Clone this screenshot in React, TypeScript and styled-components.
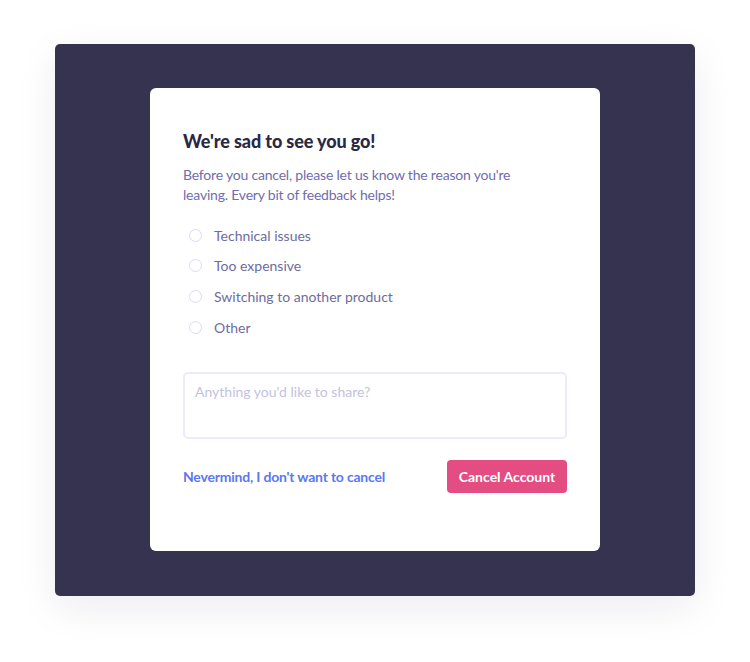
import React, { useState } from 'react';
import styled, { createGlobalStyle } from 'styled-components';

const GlobalStyle = createGlobalStyle`
  body {
    margin: 0;
    background: #ffffff;
    font-family: 'Lato', 'Liberation Sans', sans-serif;
    -webkit-font-smoothing: antialiased;
  }
`;

const Page = styled.div`
  padding: 44px 55px;
`;

const Backdrop = styled.div`
  width: 640px;
  height: 552px;
  box-sizing: border-box;
  background: #353350;
  border-radius: 5px;
  box-shadow: 0 12px 40px rgba(30, 30, 60, 0.08);
  padding: 44px 95px;
`;

const Card = styled.div`
  background: #ffffff;
  border-radius: 6px;
  height: 463px;
  box-sizing: border-box;
  padding: 41px 33px 0;
`;

const Title = styled.h2`
  margin: 0;
  font-size: 18px;
  line-height: 24px;
  font-weight: 900;
  color: #2a2944;
  letter-spacing: -0.1px;
`;

const Lead = styled.p`
  margin: 12px 0 0;
  font-size: 14px;
  line-height: 20px;
  color: #6f6dab;
  letter-spacing: -0.2px;
  max-width: 340px;
`;

const Options = styled.div`
  margin-top: 20px;
  display: flex;
  flex-direction: column;
  gap: 10.8px;
`;

const Option = styled.label`
  display: flex;
  align-items: center;
  gap: 12px;
  padding-left: 6px;
  height: 20px;
  font-size: 14px;
  color: #6e6c9e;
  cursor: pointer;
`;

const Radio = styled.span<{ $checked: boolean }>`
  width: 13px;
  height: 13px;
  border-radius: 50%;
  box-sizing: border-box;
  border: 1.5px solid #dcdbf6;
  background: ${(p) => (p.$checked ? '#6f6dab' : '#ffffff')};
`;

const Notes = styled.textarea`
  display: block;
  margin-top: 35px;
  width: 100%;
  height: 67px;
  box-sizing: border-box;
  border: 2px solid #ebebfc;
  border-radius: 5px;
  padding: 8px 10px;
  resize: none;
  font-family: inherit;
  font-size: 14px;
  line-height: 20px;
  color: #6e6c9e;
  outline: none;
  &::placeholder {
    color: #c3c2e0;
  }
`;

const Footer = styled.div`
  margin-top: 21px;
  display: flex;
  align-items: center;
  justify-content: space-between;
`;

const BackLink = styled.a`
  font-size: 14px;
  font-weight: 700;
  color: #5a78ef;
  letter-spacing: -0.2px;
  text-decoration: none;
  cursor: pointer;
`;

const DangerButton = styled.button`
  height: 33px;
  width: 120px;
  border: none;
  border-radius: 4px;
  background: #e34d82;
  color: #ffffff;
  font-family: inherit;
  font-size: 14px;
  font-weight: 700;
  cursor: pointer;
`;

const reasons = [
  'Technical issues',
  'Too expensive',
  'Switching to another product',
  'Other',
];

export default function App() {
  const [reason, setReason] = useState<string | null>(null);

  return (
    <>
      <GlobalStyle />
      <Page>
        <Backdrop>
          <Card>
            <Title>We're sad to see you go!</Title>
            <Lead>
              Before you cancel, please let us know the reason you're leaving. Every bit of
              feedback helps!
            </Lead>
            <Options>
              {reasons.map((r) => (
                <Option key={r} onClick={() => setReason(r)}>
                  <Radio $checked={reason === r} />
                  {r}
                </Option>
              ))}
            </Options>
            <Notes placeholder="Anything you'd like to share?" />
            <Footer>
              <BackLink>Nevermind, I don't want to cancel</BackLink>
              <DangerButton>Cancel Account</DangerButton>
            </Footer>
          </Card>
        </Backdrop>
      </Page>
    </>
  );
}
